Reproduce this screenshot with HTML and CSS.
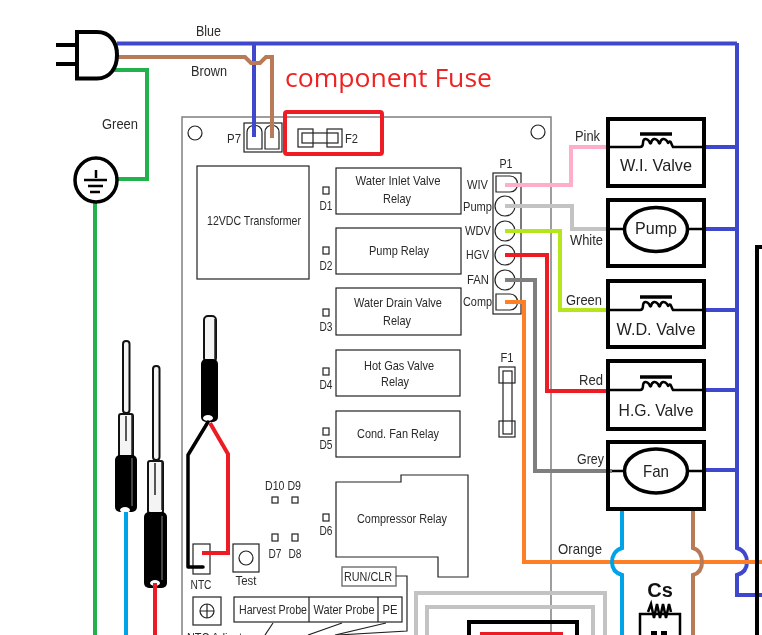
FILE: index.html
```
<!DOCTYPE html>
<html lang="en">
<head>
<meta charset="utf-8">
<title>Wiring diagram</title>
<link rel="stylesheet" href="styles.css">
</head>
<body>
<svg class="diagram" width="762" height="635" viewBox="0 0 762 635" xmlns="http://www.w3.org/2000/svg">
  <defs>
    <g id="coil">
      <path class="thick" d="M0 -13H32"/>
      <path class="line2" d="M-32 0H0C2 0 3-2 3-4C3-9 7-9 9-6C10-4 10-3 11-4C12-9 16-9 18-6C19-4 19-3 20-4C21-9 25-9 27-6C28-4 28-3 29-5C31-7 31-3 33 0H66"/>
    </g>
  </defs>

  <!-- board -->
  <path class="board" d="M182 635V117H551V635"/>
  <circle class="thin" cx="195" cy="133" r="7"/>
  <circle class="thin" cx="538" cy="132" r="7"/>

  <rect class="thin" x="244" y="123" width="38" height="29"/>
  <path class="thin" d="M247 149V132C247 123 262 123 262 132V149Z"/>
  <path class="thin" d="M265 149V132C265 123 279 123 279 132V149Z"/>
  <text class="lbl" x="234" y="143" text-anchor="middle" textLength="14" lengthAdjust="spacingAndGlyphs">P7</text>

  <rect class="thin" x="298" y="129" width="15" height="18"/>
  <rect class="thin" x="327" y="129" width="15" height="18"/>
  <rect class="thin" x="302" y="133" width="36" height="10"/>
  <text class="lbl" x="345" y="143" textLength="13" lengthAdjust="spacingAndGlyphs">F2</text>

  <rect class="thin" x="197" y="166" width="112" height="113"/>
  <text class="lbl" x="254" y="225" text-anchor="middle" textLength="94" lengthAdjust="spacingAndGlyphs">12VDC Transformer</text>

  <rect class="thin" x="336" y="168" width="125" height="46"/>
  <text class="lbl" x="398" y="185" text-anchor="middle" textLength="85" lengthAdjust="spacingAndGlyphs">Water Inlet Valve</text>
  <text class="lbl" x="397" y="203" text-anchor="middle" textLength="28" lengthAdjust="spacingAndGlyphs">Relay</text>
  <rect class="thin" x="336" y="228" width="125" height="46"/>
  <text class="lbl" x="399" y="255" text-anchor="middle" textLength="60" lengthAdjust="spacingAndGlyphs">Pump Relay</text>
  <rect class="thin" x="336" y="288" width="125" height="47"/>
  <text class="lbl" x="398" y="307" text-anchor="middle" textLength="88" lengthAdjust="spacingAndGlyphs">Water Drain Valve</text>
  <text class="lbl" x="397" y="325" text-anchor="middle" textLength="28" lengthAdjust="spacingAndGlyphs">Relay</text>
  <rect class="thin" x="336" y="350" width="124" height="46"/>
  <text class="lbl" x="399" y="370" text-anchor="middle" textLength="70" lengthAdjust="spacingAndGlyphs">Hot Gas Valve</text>
  <text class="lbl" x="395" y="386" text-anchor="middle" textLength="28" lengthAdjust="spacingAndGlyphs">Relay</text>
  <rect class="thin" x="336" y="411" width="124" height="46"/>
  <text class="lbl" x="398" y="438" text-anchor="middle" textLength="82" lengthAdjust="spacingAndGlyphs">Cond. Fan Relay</text>
  <path class="thin" d="M336 482H401V475H468V577H438V557H336Z"/>
  <text class="lbl" x="402" y="523" text-anchor="middle" textLength="90" lengthAdjust="spacingAndGlyphs">Compressor Relay</text>

  <rect class="thin" x="323" y="187" width="6" height="7"/><text class="lbl" x="326" y="210" text-anchor="middle" textLength="13" lengthAdjust="spacingAndGlyphs">D1</text>
  <rect class="thin" x="323" y="247" width="6" height="7"/><text class="lbl" x="326" y="270" text-anchor="middle" textLength="13" lengthAdjust="spacingAndGlyphs">D2</text>
  <rect class="thin" x="323" y="309" width="6" height="7"/><text class="lbl" x="326" y="331" text-anchor="middle" textLength="13" lengthAdjust="spacingAndGlyphs">D3</text>
  <rect class="thin" x="323" y="368" width="6" height="7"/><text class="lbl" x="326" y="389" text-anchor="middle" textLength="13" lengthAdjust="spacingAndGlyphs">D4</text>
  <rect class="thin" x="323" y="428" width="6" height="7"/><text class="lbl" x="326" y="449" text-anchor="middle" textLength="13" lengthAdjust="spacingAndGlyphs">D5</text>
  <rect class="thin" x="323" y="514" width="6" height="7"/><text class="lbl" x="326" y="535" text-anchor="middle" textLength="13" lengthAdjust="spacingAndGlyphs">D6</text>

  <text class="lbl" x="283" y="490" text-anchor="middle" textLength="36" lengthAdjust="spacingAndGlyphs">D10 D9</text>
  <rect class="thin" x="272" y="497" width="6" height="6"/>
  <rect class="thin" x="292" y="497" width="6" height="6"/>
  <rect class="thin" x="272" y="534" width="6" height="7"/>
  <rect class="thin" x="292" y="534" width="6" height="7"/>
  <text class="lbl" x="275" y="558" text-anchor="middle" textLength="13" lengthAdjust="spacingAndGlyphs">D7</text>
  <text class="lbl" x="295" y="558" text-anchor="middle" textLength="13" lengthAdjust="spacingAndGlyphs">D8</text>

  <rect class="thin" x="499" y="367" width="16" height="16"/>
  <rect class="thin" x="499" y="421" width="16" height="16"/>
  <rect class="thin" x="503" y="371" width="9" height="63"/>
  <text class="lbl" x="507" y="362" text-anchor="middle" textLength="13" lengthAdjust="spacingAndGlyphs">F1</text>

  <!-- P1 -->
  <rect class="thin" x="493" y="173" width="28" height="141"/>
  <path class="thin" d="M496 176H510C520 176 520 192 510 192H496Z"/>
  <circle class="thin" cx="505" cy="206" r="10"/>
  <circle class="thin" cx="505" cy="231" r="10"/>
  <circle class="thin" cx="505" cy="255" r="10"/>
  <circle class="thin" cx="505" cy="280" r="10"/>
  <path class="thin" d="M496 294H510C520 294 520 310 510 310H496Z"/>
  <text class="lbl" x="506" y="168" text-anchor="middle" textLength="13" lengthAdjust="spacingAndGlyphs">P1</text>
  <text class="lbl" x="488" y="189" text-anchor="end" textLength="21" lengthAdjust="spacingAndGlyphs">WIV</text>
  <text class="lbl" x="492" y="211" text-anchor="end" textLength="29" lengthAdjust="spacingAndGlyphs">Pump</text>
  <text class="lbl" x="491" y="235" text-anchor="end" textLength="26" lengthAdjust="spacingAndGlyphs">WDV</text>
  <text class="lbl" x="489" y="259" text-anchor="end" textLength="23" lengthAdjust="spacingAndGlyphs">HGV</text>
  <text class="lbl" x="489" y="284" text-anchor="end" textLength="22" lengthAdjust="spacingAndGlyphs">FAN</text>
  <text class="lbl" x="492" y="306" text-anchor="end" textLength="29" lengthAdjust="spacingAndGlyphs">Comp</text>

  <!-- lower board controls -->
  <rect class="thin" x="193" y="544" width="17" height="30"/>
  <text class="lbl" x="201" y="589" text-anchor="middle" textLength="21" lengthAdjust="spacingAndGlyphs">NTC</text>
  <rect class="thin" x="233" y="544" width="26" height="28"/>
  <circle class="thin" cx="246" cy="558" r="7"/>
  <text class="lbl" x="246" y="585" text-anchor="middle" textLength="21" lengthAdjust="spacingAndGlyphs">Test</text>
  <rect class="thin" x="193" y="597" width="28" height="28"/>
  <circle class="thin" cx="207" cy="611" r="7"/>
  <path class="thin" d="M200 611H214M207 604V618"/>
  <text class="lbl" x="187" y="642" textLength="55" lengthAdjust="spacingAndGlyphs">NTC Adjust</text>
  <rect class="grayline" x="342" y="567" width="54" height="19"/>
  <text class="lbl" x="368" y="581" text-anchor="middle" textLength="48" lengthAdjust="spacingAndGlyphs">RUN/CLR</text>
  <path class="thin" d="M396 576H407V631L337 635"/>
  <rect class="thin" x="234" y="597" width="168" height="25"/>
  <path class="thin" d="M309 597V622M378 597V622"/>
  <text class="lbl" x="273" y="614" text-anchor="middle" textLength="68" lengthAdjust="spacingAndGlyphs">Harvest Probe</text>
  <text class="lbl" x="344" y="614" text-anchor="middle" textLength="61" lengthAdjust="spacingAndGlyphs">Water Probe</text>
  <text class="lbl" x="390" y="614" text-anchor="middle" textLength="15" lengthAdjust="spacingAndGlyphs">PE</text>
  <path class="thin" d="M273 623L265 635M342 623L308 635M386 623L335 635"/>

  <!-- inner frames -->
  <path class="w-frame" d="M416 635V593H605V635"/>
  <path class="w-frame" d="M427 635V607H593V635"/>
  <path class="line4" d="M469 635V622H577V635"/>
  <path class="w-red" d="M480 634H563"/>

  <!-- wires -->
  <path class="w-blue" d="M117 43.500H737"/>
  <path class="w-blue" d="M254 43V137"/>
  <path class="w-brown" d="M118 57H245L251 63H260L266 57H272V138"/>
  <path class="w-green" d="M112 70H147V179H115"/>
  <path class="w-green" d="M95 202V635"/>
  <path class="w-blue" d="M737 43V548C744 550 747 556 747 562C747 568 744 573 737 575V595H762"/>
  <path class="w-blue" d="M706 147H736M706 229H736M706 310H736M706 390H736M706 470H736"/>

  <path class="w-pink" d="M505 185H571V147H607"/>
  <path class="w-white" d="M505 206H572V229H610"/>
  <path class="w-lime" d="M505 231H560V310H608"/>
  <path class="w-red" d="M505 255H547V391H608"/>
  <path class="w-grey" d="M505 280H535V471H612"/>
  <path class="w-orange" d="M505 302H524V562H762"/>

  <path class="w-cyan" d="M622 511V548C615 550 612 556 612 562C612 568 615 573 622 575V635"/>
  <path class="w-brown" d="M693 511V548C700 550 702 556 702 562C702 568 700 573 693 575V635"/>

  <!-- plug and earth -->
  <path class="line4" d="M56 45H77M56 64H77"/>
  <path class="plug" d="M97 32H77V78.500H97C110 78.500 117 68 117 55C117 42 110 32 97 32Z"/>
  <ellipse class="oval" cx="96" cy="180" rx="21" ry="22"/>
  <path class="line2" d="M96 170V178M84 180H107M88 186H103M90 192H100"/>

  <!-- loads -->
  <rect class="load" x="608" y="119" width="96" height="67"/>
  <use href="#coil" x="640" y="147"/>
  <text class="big" x="656" y="171" text-anchor="middle" textLength="72" lengthAdjust="spacingAndGlyphs">W.I. Valve</text>

  <rect class="load" x="608" y="200" width="96" height="66"/>
  <path class="line2" d="M610 229H704"/>
  <ellipse class="oval" cx="656" cy="229.500" rx="31.500" ry="22"/>
  <text class="big" x="656" y="234" text-anchor="middle" textLength="42" lengthAdjust="spacingAndGlyphs">Pump</text>

  <rect class="load" x="608" y="281" width="96" height="66"/>
  <use href="#coil" x="640" y="310"/>
  <text class="big" x="656" y="335" text-anchor="middle" textLength="79" lengthAdjust="spacingAndGlyphs">W.D. Valve</text>

  <rect class="load" x="608" y="361" width="96" height="68"/>
  <use href="#coil" x="640" y="390"/>
  <text class="big" x="656" y="416" text-anchor="middle" textLength="75" lengthAdjust="spacingAndGlyphs">H.G. Valve</text>

  <rect class="load" x="608" y="442" width="96" height="67"/>
  <path class="line2" d="M612 471H704"/>
  <ellipse class="oval" cx="656" cy="471" rx="31.500" ry="22"/>
  <text class="big" x="656" y="477" text-anchor="middle" textLength="26" lengthAdjust="spacingAndGlyphs">Fan</text>

  <text class="lbl2" x="587.500" y="141" text-anchor="middle" textLength="25" lengthAdjust="spacingAndGlyphs">Pink</text>
  <text class="lbl2" x="586.500" y="245" text-anchor="middle" textLength="33" lengthAdjust="spacingAndGlyphs">White</text>
  <text class="lbl2" x="584" y="305" text-anchor="middle" textLength="36" lengthAdjust="spacingAndGlyphs">Green</text>
  <text class="lbl2" x="591" y="385" text-anchor="middle" textLength="24" lengthAdjust="spacingAndGlyphs">Red</text>
  <text class="lbl2" x="590.500" y="464" text-anchor="middle" textLength="27" lengthAdjust="spacingAndGlyphs">Grey</text>
  <text class="lbl2" x="580" y="554" text-anchor="middle" textLength="44" lengthAdjust="spacingAndGlyphs">Orange</text>
  <text class="lbl2" x="208.500" y="36" text-anchor="middle" textLength="25" lengthAdjust="spacingAndGlyphs">Blue</text>
  <text class="lbl2" x="209" y="76" text-anchor="middle" textLength="36" lengthAdjust="spacingAndGlyphs">Brown</text>
  <text class="lbl2" x="120" y="129" text-anchor="middle" textLength="36" lengthAdjust="spacingAndGlyphs">Green</text>

  <!-- capacitor -->
  <text class="cs" x="660" y="597" text-anchor="middle">Cs</text>
  <path class="line2" d="M648 612L651 604L654 618L657 604L660 618L663 604L666 618L669 604L671 612"/>
  <path class="line2" d="M680 635V614H640V635"/>
  <rect class="solid" x="651" y="631" width="6" height="4"/>
  <rect class="solid" x="661" y="631" width="6" height="4"/>

  <path class="line4" d="M757 635V247H762"/>

  <!-- probes -->
  <g class="probe">
    <rect class="tube" x="123" y="341" width="6.500" height="72" rx="3"/>
    <rect class="tube" x="119" y="414" width="14" height="44" rx="2"/>
    <path class="tubeline" d="M126 416V441M132 415V456"/>
    <rect class="sheath" x="115" y="455" width="22" height="57" rx="5"/>
    <path class="shine" d="M132 458V506"/>
    <ellipse class="hole" cx="125" cy="510" rx="5" ry="3"/>
    <rect class="tube" x="153" y="366" width="6.500" height="94" rx="3"/>
    <rect class="tube" x="148" y="461" width="15" height="52" rx="2"/>
    <path class="tubeline" d="M155 463V495M162 462V510"/>
    <rect class="sheath" x="144" y="512" width="23" height="76" rx="5"/>
    <path class="shine" d="M162 516V580"/>
    <ellipse class="hole" cx="155" cy="583" rx="5" ry="3"/>
    <rect class="tube" x="204" y="316" width="12" height="46" rx="4"/>
    <path class="tubeline" d="M215 319V359"/>
    <rect class="sheath" x="201" y="359" width="17" height="63" rx="5"/>
    <ellipse class="hole" cx="208" cy="418" rx="5" ry="3"/>
  </g>
  <path class="w-cyan" d="M126 512V635"/>
  <path class="w-red" d="M155 583V635"/>
  <path class="line3" d="M208 422L188 455V567H203"/>
  <path class="w-red" d="M210 423L228 454V553H202"/>

  <!-- annotation -->
  <rect class="callout" x="285" y="112" width="97" height="42" rx="2"/>
  <text class="note" x="285" y="87" textLength="207" lengthAdjust="spacingAndGlyphs">component Fuse</text>
</svg>
</body>
</html>
```

FILE: styles.css
```
html, body { margin: 0; padding: 0; background: #fff; }
.diagram { display: block; filter: blur(0.3px); }
.diagram path, .diagram rect, .diagram circle, .diagram ellipse { fill: none; }
.lbl { font: 13px "Liberation Sans", Arial, sans-serif; fill: #2a2a2a; }
.lbl2 { font: 15px "Liberation Sans", Arial, sans-serif; fill: #2a2a2a; }
.big { font: 17px "Liberation Sans", Arial, sans-serif; fill: #222; }
.cs { font: bold 20px "Liberation Sans", Arial, sans-serif; fill: #111; }
.note { font: 26px "Open Sans", "Noto Sans", sans-serif; fill: #ee2222; }
.diagram .board { stroke: #7f7f7f; stroke-width: 1.5; }
.diagram .thin { stroke: #222; stroke-width: 1.2; }
.diagram .grayline { stroke: #777; stroke-width: 1.5; }
.diagram .line2 { stroke: #000; stroke-width: 2.5; }
.diagram .line3 { stroke: #000; stroke-width: 3.5; stroke-linecap: round; stroke-linejoin: round; }
.diagram .line4 { stroke: #000; stroke-width: 4; }
.diagram .thick { stroke: #000; stroke-width: 3.5; }
.diagram .plug { stroke: #000; stroke-width: 4; fill: #fff; }
.diagram .oval { stroke: #000; stroke-width: 3.5; fill: #fff; }
.diagram .load { stroke: #000; stroke-width: 4; }
.diagram .callout { stroke: #ee1c25; stroke-width: 4; }
.diagram .solid { fill: #000; }
.diagram .tube { fill: #f4f4f4; stroke: #111; stroke-width: 2; }
.diagram .tubeline { stroke: #222; stroke-width: 1.5; }
.diagram .sheath { fill: #000; }
.diagram .shine { stroke: #888; stroke-width: 1; }
.diagram .hole { fill: #fff; }
.diagram .w-blue, .diagram .w-brown, .diagram .w-green, .diagram .w-pink, .diagram .w-white,
.diagram .w-lime, .diagram .w-red, .diagram .w-grey, .diagram .w-orange, .diagram .w-cyan, .diagram .w-frame {
  stroke-width: 4; stroke-linejoin: miter;
}
.diagram .w-blue { stroke: #3f48cc; }
.diagram .w-brown { stroke: #b97a57; }
.diagram .w-green { stroke: #22b14c; }
.diagram .w-pink { stroke: #ffaec9; }
.diagram .w-white { stroke: #c3c3c3; }
.diagram .w-lime { stroke: #b5e61d; }
.diagram .w-red { stroke: #ed1c24; }
.diagram .w-grey { stroke: #7f7f7f; }
.diagram .w-orange { stroke: #ff7f27; }
.diagram .w-cyan { stroke: #00a2e8; }
.diagram .w-frame { stroke: #c3c3c3; }
```
